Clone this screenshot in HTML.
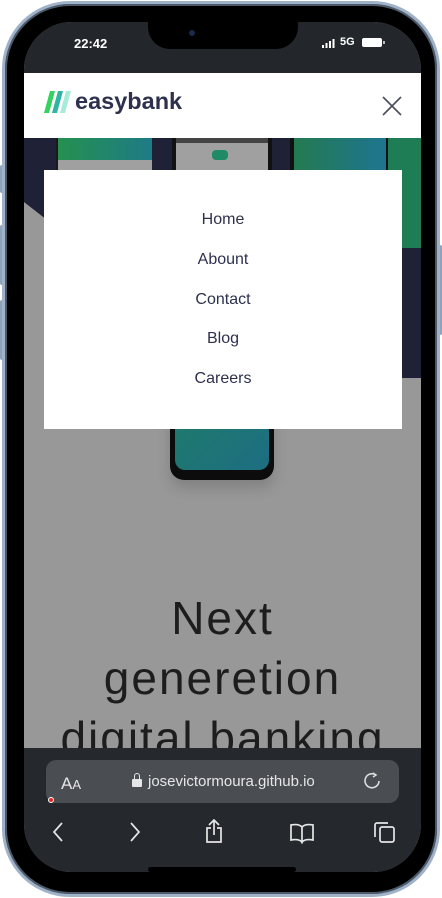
<!DOCTYPE html>
<html><head><meta charset="utf-8"><style>
*{margin:0;padding:0;box-sizing:border-box}
body{width:442px;height:898px;background:#fff;position:relative;overflow:hidden;font-family:"Liberation Sans",sans-serif}
.phone{position:absolute;left:2px;top:1px;width:438px;height:896px;border-radius:68px;background:#000;border:3px solid #9fb2c8;box-shadow:inset 0 0 0 2px #4c5a6a}
.btn{position:absolute;width:4px;background:#8ea3bb;border-radius:2px}
.screen{position:absolute;left:24px;top:22px;width:397px;height:850px;border-radius:48px;overflow:hidden;background:#989898}
.abs{position:absolute}
</style></head><body>
<div class="btn" style="left:0;top:165px;height:28px"></div>
<div class="btn" style="left:0;top:225px;height:60px"></div>
<div class="btn" style="left:0;top:300px;height:60px"></div>
<div class="btn" style="left:438px;top:245px;height:90px"></div>
<div class="phone"></div>
<div class="screen">
  <div class="abs" style="left:0;top:0;width:397px;height:51px;background:#23272b"></div>
  <div class="abs" style="left:124px;top:0;width:150px;height:27px;background:#000;border-radius:0 0 22px 22px"></div>
  <div class="abs" style="left:165px;top:8px;width:6px;height:6px;border-radius:50%;background:#1a2a4a"></div>
  <div class="abs" style="left:50px;top:14px;color:#fff;font-weight:bold;font-size:13px">22:42</div>
  <svg class="abs" style="left:298px;top:17px" width="14" height="9"><rect x="0" y="6" width="2" height="3" fill="#fff"/><rect x="3.5" y="4" width="2" height="5" fill="#fff"/><rect x="7" y="2" width="2" height="7" fill="#fff"/><rect x="10.5" y="0" width="2" height="9" fill="#fff"/></svg>
  <div class="abs" style="left:316px;top:14px;color:#fff;font-weight:bold;font-size:11px">5G</div>
  <div class="abs" style="left:338px;top:16px;width:20px;height:9px;background:#fff;border-radius:2px"></div>
  <div class="abs" style="left:359px;top:19px;width:2px;height:3px;background:#bbb"></div>
  <div class="abs" style="left:0;top:51px;width:397px;height:65px;background:#fff"></div>
  <svg class="abs" style="left:20px;top:69px" width="30" height="22" viewBox="0 0 30 22"><path d="M6 0h5L5 22H0z" fill="#33d35e"/><path d="M14 0h5L13 22H8z" fill="#2fb6a0"/><path d="M22 0h5L21 22h-5z" fill="#a8ecd8"/></svg>
  <div class="abs" style="left:51px;top:66px;font-size:23.5px;font-weight:bold;color:#2d314d">easybank</div>
  <svg class="abs" style="left:358px;top:74px" width="20" height="20"><path d="M1 1L19 19M19 1L1 19" stroke="#4a4e5a" stroke-width="1.6"/></svg>
  <div class="abs" style="left:0;top:116px;width:397px;height:240px;background:#1f2137"></div>
  <div class="abs" style="left:0;top:180px;width:250px;height:200px;background:#989898;transform:skewY(38deg);transform-origin:0 0"></div>
  <div class="abs" style="left:340px;top:116px;width:57px;height:110px;background:#1e7d55;border-radius:0 0 0 30px"></div>
  <div class="abs" style="left:32px;top:116px;width:96px;height:40px;background:#1a1a1a"></div>
  <div class="abs" style="left:34px;top:116px;width:94px;height:22px;background:linear-gradient(90deg,#25904f,#1e7b86)"></div>
  <div class="abs" style="left:34px;top:138px;width:94px;height:18px;background:#a0a0a0"></div>
  <div class="abs" style="left:148px;top:116px;width:100px;height:40px;background:#111"></div>
  <div class="abs" style="left:152px;top:116px;width:92px;height:40px;background:#a0a0a0"></div>
  <div class="abs" style="left:152px;top:116px;width:92px;height:5px;background:#444"></div>
  <div class="abs" style="left:188px;top:128px;width:16px;height:10px;border-radius:4px;background:#1e8a66"></div>
  <div class="abs" style="left:266px;top:116px;width:98px;height:40px;background:#111"></div>
  <div class="abs" style="left:270px;top:116px;width:92px;height:40px;background:linear-gradient(90deg,#247a50,#1e7590)"></div>
  <div class="abs" style="left:146px;top:360px;width:104px;height:98px;background:#0c0c0c;border-radius:0 0 14px 14px;box-shadow:0 8px 14px rgba(0,0,0,.15)"></div>
  <div class="abs" style="left:151px;top:360px;width:94px;height:88px;background:linear-gradient(135deg,#1f7c66,#1d6e82);border-radius:0 0 10px 10px"></div>
  <div class="abs" style="left:20px;top:148px;width:358px;height:259px;background:#fff;text-align:center;font-size:16px;color:#2d314d;line-height:39.8px;padding-top:30px">Home<br>Abount<br>Contact<br>Blog<br>Careers</div>
  <div class="abs" style="left:-20px;top:566px;width:437px;text-align:center;font-size:46px;line-height:60px;color:#1d1d1d;letter-spacing:2px">Next<br>generetion<br>digital banking</div>
  <div class="abs" style="left:0;top:726px;width:397px;height:124px;background:#25282c"></div>
  <div class="abs" style="left:22px;top:738px;width:353px;height:43px;background:#4a4d52;border-radius:10px"></div>
  <div class="abs" style="left:37px;top:752px;color:#e6e6e6;font-size:17px">A<span style="font-size:13px">A</span></div>
  <div class="abs" style="left:108px;top:757px;width:10px;height:8px;background:#e6e6e6;border-radius:1px"></div>
  <div class="abs" style="left:110px;top:751px;width:6px;height:8px;border:1.5px solid #e6e6e6;border-radius:3px 3px 0 0"></div>
  <div class="abs" style="left:124px;top:751px;color:#e6e6e6;font-size:15px">josevictormoura.github.io</div>
  <svg class="abs" style="left:340px;top:750px" width="18" height="18"><path d="M12 3A7 7 0 1 0 15 9" stroke="#ddd" stroke-width="1.6" fill="none"/><path d="M9 1l3 2-3 2" stroke="#ddd" stroke-width="1.5" fill="none"/></svg>
  <div class="abs" style="left:24px;top:775px;width:6px;height:6px;border-radius:50%;background:#e22;border:1px solid #fff"></div>
  <svg class="abs" style="left:26px;top:797px" width="360" height="26" fill="none" stroke="#e6e6e6" stroke-width="1.7">
    <path d="M12 4L4 13l8 9"/>
    <path d="M81 4l8 9-8 9"/>
    <path d="M161 9h-4v14h14V9h-4M164 2v14M159 6l5-5 5 5"/>
    <path d="M241 6c5-1 9 0 11 2v15c-2-2-6-3-11-2zM263 6c-5-1-9 0-11 2v15c2-2 6-3 11-2z"/>
    <rect x="330" y="8" width="14" height="15" rx="2"/>
    <path d="M325 18V6a2 2 0 0 1 2-2h11"/>
  </svg>
  <div class="abs" style="left:124px;top:845px;width:148px;height:5px;border-radius:3px;background:#000"></div>
</div>
</body></html>
